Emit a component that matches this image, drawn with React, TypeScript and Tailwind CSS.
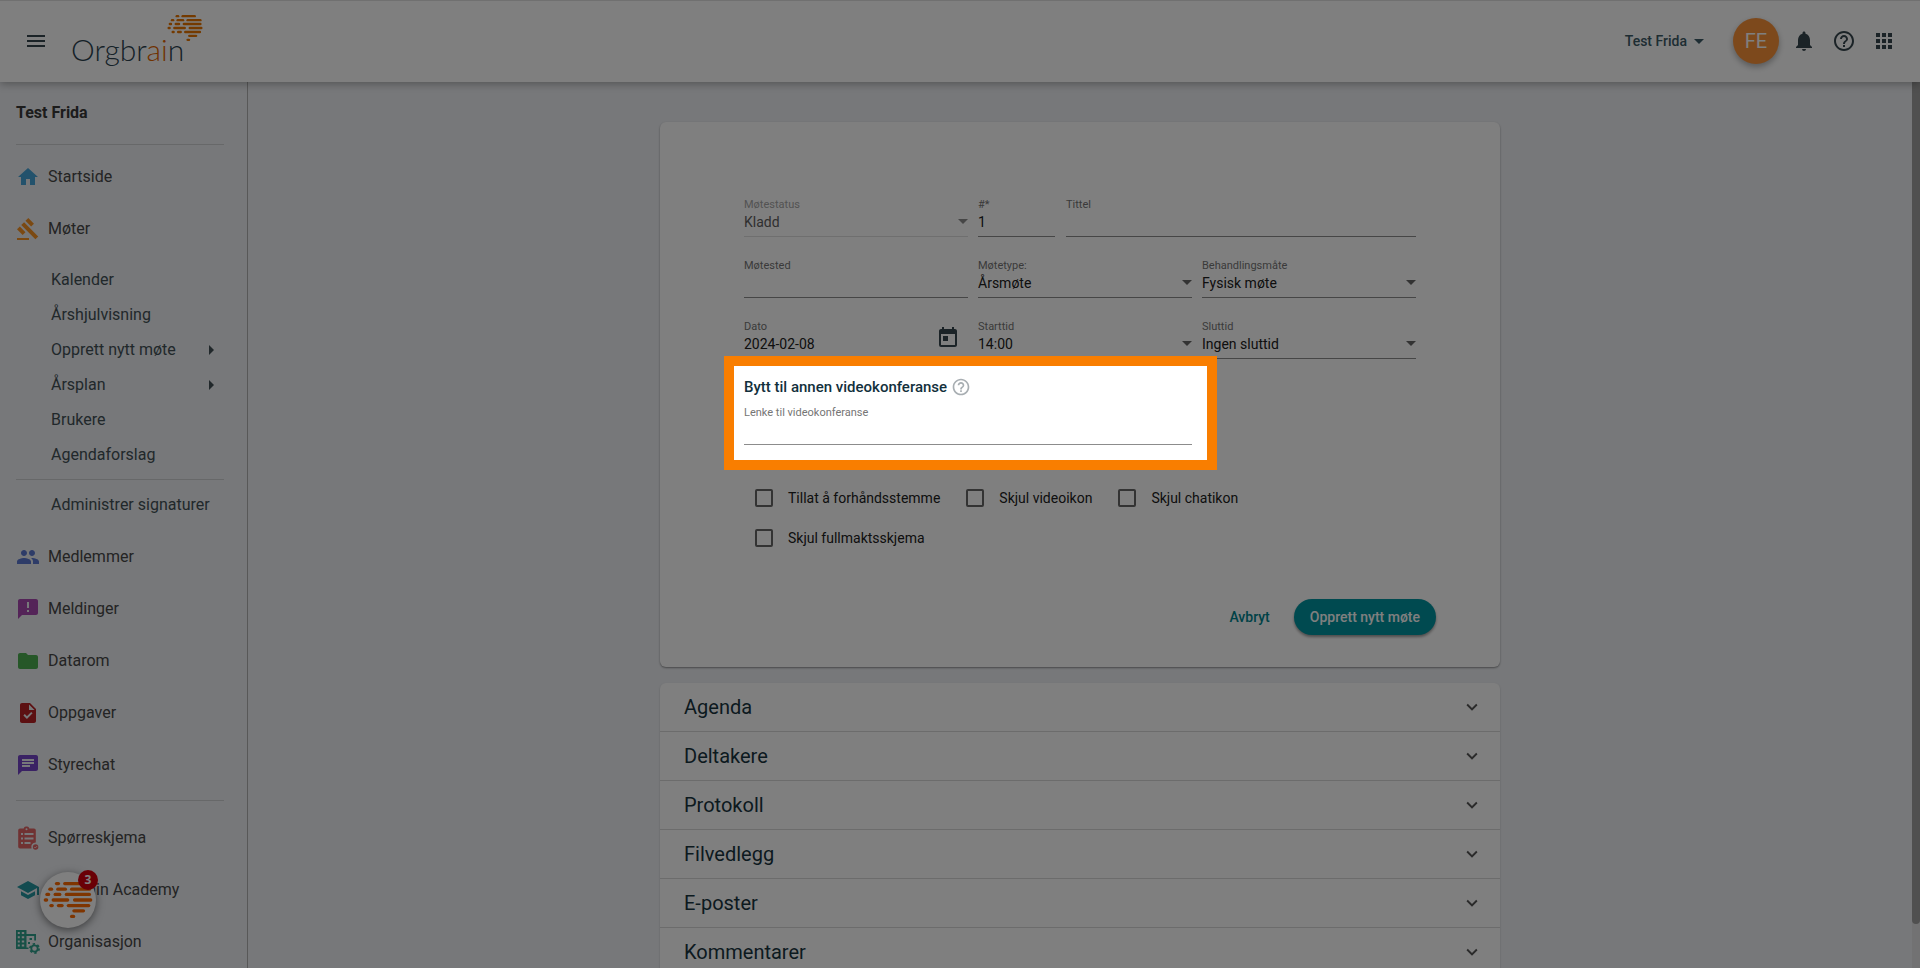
import { useState } from "react";
import type { ReactNode } from "react";
import type { IconType } from "react-icons";
import {
  MdAnnouncement,
  MdApps,
  MdArrowDropDown,
  MdArrowRight,
  MdChat,
  MdFolder,
  MdGavel,
  MdHelpOutline,
  MdHome,
  MdKeyboardArrowDown,
  MdMenu,
  MdNotifications,
  MdPeople,
  MdSchool,
  MdTask,
  MdToday,
} from "react-icons/md";

interface NavItemProps {
  icon: ReactNode;
  label: string;
}

const meetingLinks = [
  { label: "Kalender", arrow: false },
  { label: "Årshjulvisning", arrow: false },
  { label: "Opprett nytt møte", arrow: true },
  { label: "Årsplan", arrow: true },
  { label: "Brukere", arrow: false },
  { label: "Agendaforslag", arrow: false },
];

const modules: { label: string; icon: IconType; color: string }[] = [
  { label: "Medlemmer", icon: MdPeople, color: "text-[#5c78d0]" },
  { label: "Meldinger", icon: MdAnnouncement, color: "text-[#a848b0]" },
  { label: "Datarom", icon: MdFolder, color: "text-[#4caf50]" },
  { label: "Oppgaver", icon: MdTask, color: "text-[#b92024]" },
  { label: "Styrechat", icon: MdChat, color: "text-[#7545c8]" },
];

const sections = [
  "Agenda",
  "Deltakere",
  "Protokoll",
  "Filvedlegg",
  "E-poster",
  "Kommentarer",
];

// x start, x end, y for every dash in the brain mark
const dashes = [
  [36, 52, 9],
  [61, 122, 9],
  [16, 31, 26],
  [40, 73, 26],
  [82, 146, 26],
  [7, 22, 42],
  [32, 56, 42],
  [66, 146, 42],
  [2, 16, 59],
  [26, 80, 59],
  [91, 150, 59],
  [19, 33, 76],
  [42, 63, 76],
  [72, 144, 76],
  [89, 128, 92],
  [82, 98, 109],
];

function BrainMark({ className }: { className: string }) {
  return (
    <svg viewBox="0 0 152 118" className={className} aria-hidden="true">
      {dashes.map(([x1, x2, y]) => (
        <rect
          key={`${x1}-${y}`}
          x={x1}
          y={y - 5}
          width={x2 - x1}
          height={10}
          rx={5}
          fill="currentColor"
        />
      ))}
    </svg>
  );
}

function SurveyIcon() {
  return (
    <svg viewBox="0 0 24 24" className="size-6 text-[#e06464]">
      <path
        fill="currentColor"
        fillRule="evenodd"
        d="M4 2.500h3.700A2.500 2.500 0 0 1 10.500 0.500a2.500 2.500 0 0 1 2.800 2H18a1.800 1.800 0 0 1 1.800 1.800V16.500a4.400 4.400 0 0 0-4.300 6H4a1.800 1.800 0 0 1-1.800-1.800V4.300A1.800 1.800 0 0 1 4 2.500zM10.500 2.200a1 1 0 1 0 0 2 1 1 0 0 0 0-2zM5 7v2h2V7zM8.500 7v2h9V7zM5 11.500v2h2v-2zM8.500 11.500v2h9v-2zM5 16v2h2v-2zM8.500 16v2h6v-2z"
      />
      <circle cx="19.600" cy="21" r="2.700" fill="currentColor" />
      <path
        d="M18.300 21l1 1 1.700-1.900"
        fill="none"
        stroke="#eef0f4"
        strokeWidth="0.800"
      />
    </svg>
  );
}

function OrganisationIcon() {
  return (
    <svg viewBox="0 0 24 24" className="size-6 text-[#2fa08c]">
      <path
        fill="currentColor"
        fillRule="evenodd"
        d="M0 0h10.500v4H20v6.500h-1.800V6h-7.700v11.500h2V19H0zM1.800 2v2h2V2zM5.800 2v2h2.400V2zM1.800 6.200v2h2v-2zM5.800 6.200v2h2.400v-2zM1.800 10.400v2h2v-2zM5.800 10.400v2h2.400v-2zM1.800 14.600v2h2v-2zM5.800 14.600v2h2.400v-2zM13.500 8H16v2h-2.500zM12 12h2v2h-2z"
      />
      <circle
        cx="18.500"
        cy="18.500"
        r="3.200"
        fill="none"
        stroke="currentColor"
        strokeWidth="1.800"
      />
      <circle
        cx="18.500"
        cy="18.500"
        r="4.600"
        fill="none"
        stroke="currentColor"
        strokeWidth="1.700"
        strokeDasharray="2.400 2.417"
      />
    </svg>
  );
}

function NavItem({ icon, label }: NavItemProps) {
  return (
    <a
      href="#"
      className="flex h-13 items-center gap-2 pl-4 text-base text-[#484848]"
    >
      {icon}
      <span>{label}</span>
    </a>
  );
}

function SubLink({ label, arrow }: { label: string; arrow: boolean }) {
  return (
    <a
      href="#"
      className="flex h-[35px] items-center justify-between pr-6 pl-[51px] text-base text-[#435056]"
    >
      {label}
      {arrow && <MdArrowRight className="size-6" />}
    </a>
  );
}

interface FieldProps {
  id: string;
  label: string;
  value?: string;
  className?: string;
  children?: ReactNode;
}

function TextField({ id, label, value = "", className, children }: FieldProps) {
  return (
    <div className={`relative flex flex-col ${className ?? ""}`}>
      <label
        htmlFor={id}
        className="-mb-0.5 text-[11px] leading-[18px] text-[#757575]"
      >
        {label}
      </label>
      <input
        id={id}
        type="text"
        defaultValue={value}
        className="h-[25px] w-full border-b border-[#8c8c8c] pb-1 text-sm text-[#202020] outline-none"
      />
      {children}
    </div>
  );
}

function SelectField({
  id,
  label,
  value,
  className,
  disabled,
}: FieldProps & { disabled?: boolean }) {
  return (
    <div className={`relative flex flex-col ${className ?? ""}`}>
      <label
        htmlFor={id}
        className={`-mb-0.5 text-[11px] leading-[18px] ${
          disabled ? "text-[#a6a6a6]" : "text-[#757575]"
        }`}
      >
        {label}
      </label>
      <select
        id={id}
        disabled={disabled}
        className={`h-[25px] w-full appearance-none border-b pb-1 text-sm opacity-100 outline-none ${
          disabled
            ? "border-[#dedede] text-[#606060]"
            : "border-[#8c8c8c] text-[#202020]"
        }`}
      >
        <option>{value}</option>
      </select>
      <svg
        viewBox="0 0 10 5"
        className={`pointer-events-none absolute top-[23px] right-0 h-[5px] w-[10px] ${
          disabled ? "text-[#8c8c8c]" : "text-[#666666]"
        }`}
      >
        <path d="M0 0h10L5 5z" fill="currentColor" />
      </svg>
    </div>
  );
}

function CheckField({ label }: { label: string }) {
  return (
    <label className="flex h-10 items-center gap-[15px] pl-[11px] text-sm text-[#202020]">
      <input
        type="checkbox"
        className="size-[18px] appearance-none rounded-xs border-2 border-[#666666]"
      />
      {label}
    </label>
  );
}

function Header() {
  return (
    <header className="relative z-10 flex h-[82px] shrink-0 items-center justify-between border-t border-[#e0e0e0] bg-white px-6 pb-px text-[#37474f] shadow-[0_2px_8px_rgba(0,0,0,0.3)]">
      <div className="flex items-center">
        <button type="button" aria-label="Meny">
          <MdMenu className="size-6" />
        </button>
        <a
          href="#"
          className="relative ml-[23px] pt-4 pr-5 font-['Lato'] text-[30px] leading-10 font-light text-[#2c4350]"
        >
          Orgbr<span className="text-[#e06400]">ai</span>n
          <BrainMark className="absolute top-px right-px h-7 w-9 text-[#e87500]" />
        </a>
      </div>
      <div className="flex items-center gap-4">
        <button
          type="button"
          className="mr-[6px] flex items-center text-sm font-medium text-[#3d5a66]"
        >
          Test Frida
          <MdArrowDropDown className="size-6" />
        </button>
        <button
          type="button"
          className="-mr-[3px] size-[46px] rounded-full bg-[#fb9239] text-xl text-white shadow-[0_3px_6px_rgba(0,0,0,0.3)]"
        >
          FE
        </button>
        <button type="button" aria-label="Varsler">
          <MdNotifications className="size-6" />
        </button>
        <button type="button" aria-label="Hjelp">
          <MdHelpOutline className="size-6" />
        </button>
        <button type="button" aria-label="Apper">
          <MdApps className="size-6" />
        </button>
      </div>
    </header>
  );
}

function Sidebar() {
  return (
    <nav className="w-[248px] shrink-0 overflow-hidden border-r border-[#b0b0b0] pt-[19px]">
      <h1 className="pl-4 text-base leading-6 font-bold text-[#383838]">
        Test Frida
      </h1>
      <hr className="mt-[19px] mr-[23px] mb-[6px] ml-4 border-[#cfd0d2]" />
      <NavItem
        icon={<MdHome className="size-6 text-[#46a4d8]" />}
        label="Startside"
      />
      <NavItem
        icon={<MdGavel className="size-6 text-[#f79324]" />}
        label="Møter"
      />
      <div className="mt-[7px]">
        {meetingLinks.map((link) => (
          <SubLink key={link.label} label={link.label} arrow={link.arrow} />
        ))}
      </div>
      <hr className="mt-[7px] mr-[23px] mb-[7px] ml-4 border-[#cfd0d2]" />
      <SubLink label="Administrer signaturer" arrow={false} />
      <div className="mt-[9px]">
        {modules.map(({ label, icon: Icon, color }) => (
          <NavItem
            key={label}
            icon={<Icon className={`size-6 ${color}`} />}
            label={label}
          />
        ))}
      </div>
      <hr className="mt-[9px] mr-[23px] mb-[11px] ml-4 border-[#cfd0d2]" />
      <NavItem icon={<SurveyIcon />} label="Spørreskjema" />
      <NavItem
        icon={<MdSchool className="size-6 text-[#2596a0]" />}
        label="Orgbrain Academy"
      />
      <NavItem icon={<OrganisationIcon />} label="Organisasjon" />
    </nav>
  );
}

function MeetingForm() {
  return (
    <form className="rounded-md bg-white px-[84px] pt-[74px] pb-8 shadow-[0_1px_2px_rgba(0,0,0,0.4)]">
      <div className="grid grid-cols-3 gap-y-5">
        <SelectField id="status" label="Møtestatus" value="Kladd" disabled />
        <div className="col-span-2 flex gap-[11px] pl-[10px]">
          <TextField id="number" label="#*" value="1" className="w-[77px]" />
          <TextField id="title" label="Tittel" className="flex-1" />
        </div>
        <TextField id="place" label="Møtested" />
        <SelectField
          id="type"
          label="Møtetype:"
          value="Årsmøte"
          className="ml-[10px]"
        />
        <SelectField
          id="treatment"
          label="Behandlingsmåte"
          value="Fysisk møte"
          className="ml-[10px]"
        />
        <TextField id="date" label="Dato" value="2024-02-08">
          <button
            type="button"
            aria-label="Velg dato"
            className="absolute top-2 right-2 text-[#37474f]"
          >
            <MdToday className="size-6" />
          </button>
        </TextField>
        <SelectField
          id="start"
          label="Starttid"
          value="14:00"
          className="ml-[10px]"
        />
        <SelectField
          id="end"
          label="Sluttid"
          value="Ingen sluttid"
          className="ml-[10px]"
        />
      </div>

      {/* tour spotlight: the outer shadow dims the rest of the page */}
      <div className="relative z-50 -mx-5 -mt-[3px] w-[493px] border-10 border-[#f97e00] bg-white px-[10px] pt-[9px] pb-[15px] shadow-[0_0_0_2400px_rgba(0,0,0,0.5)]">
        <div className="flex items-center gap-1">
          <h2 className="text-[15px] leading-6 font-medium text-[#12303c]">
            Bytt til annen videokonferanse
          </h2>
          <MdHelpOutline className="size-5 text-[#a8aeb2]" />
        </div>
        <TextField
          id="video"
          label="Lenke til videokonferanse"
          className="mt-[5px] mr-[5px]"
        />
      </div>

      <div className="mt-2 flex flex-wrap gap-x-[15px]">
        <CheckField label="Tillat å forhåndsstemme" />
        <CheckField label="Skjul videoikon" />
        <CheckField label="Skjul chatikon" />
        <CheckField label="Skjul fullmaktsskjema" />
      </div>

      <div className="mt-[41px] -mr-5 flex items-center justify-end gap-6 text-sm font-medium">
        <button type="button" className="text-[#00848e]">
          Avbryt
        </button>
        <button
          type="submit"
          className="h-9 rounded-full bg-[#0094a0] px-4 text-white shadow-[0_2px_3px_rgba(0,0,0,0.4)]"
        >
          Opprett nytt møte
        </button>
      </div>
    </form>
  );
}

export default function App() {
  const [open, setOpen] = useState("");

  return (
    <div className="relative flex h-screen flex-col overflow-hidden bg-[#eef0f4] font-['Roboto',sans-serif]">
      <Header />
      <div className="flex min-h-0 flex-1">
        <Sidebar />
        <main className="flex-1 pt-10">
          <div className="mx-auto w-[840px]">
            <MeetingForm />
            <div className="mt-4 rounded-t-md bg-white shadow-[0_1px_2px_rgba(0,0,0,0.2)]">
              {sections.map((name) => (
                <button
                  key={name}
                  type="button"
                  aria-expanded={open === name}
                  onClick={() => setOpen(open === name ? "" : name)}
                  className="flex h-[49px] w-full items-center justify-between border-b border-[#d8d8d8] pr-[17px] pl-6 text-xl text-[#18343f]"
                >
                  {name}
                  <MdKeyboardArrowDown className="size-[22px] text-[#555555]" />
                </button>
              ))}
            </div>
          </div>
        </main>
        <div className="w-2 bg-[#e4e4e6]">
          <div className="h-[95%] rounded-b-sm bg-[#a0a0a0]" />
        </div>
      </div>

      <button
        type="button"
        aria-label="Meldinger fra Orgbrain"
        className="absolute bottom-10 left-10 grid size-14 place-items-center rounded-full bg-white shadow-[0_2px_8px_rgba(0,0,0,0.5)]"
      >
        <BrainMark className="h-10 w-[50px] text-[#ff6a00]" />
        <span className="absolute -top-[2px] -right-[2px] grid size-5 place-items-center rounded-full bg-[#d5000c] font-['Open_Sans'] text-xs font-bold text-white">
          3
        </span>
      </button>
    </div>
  );
}
